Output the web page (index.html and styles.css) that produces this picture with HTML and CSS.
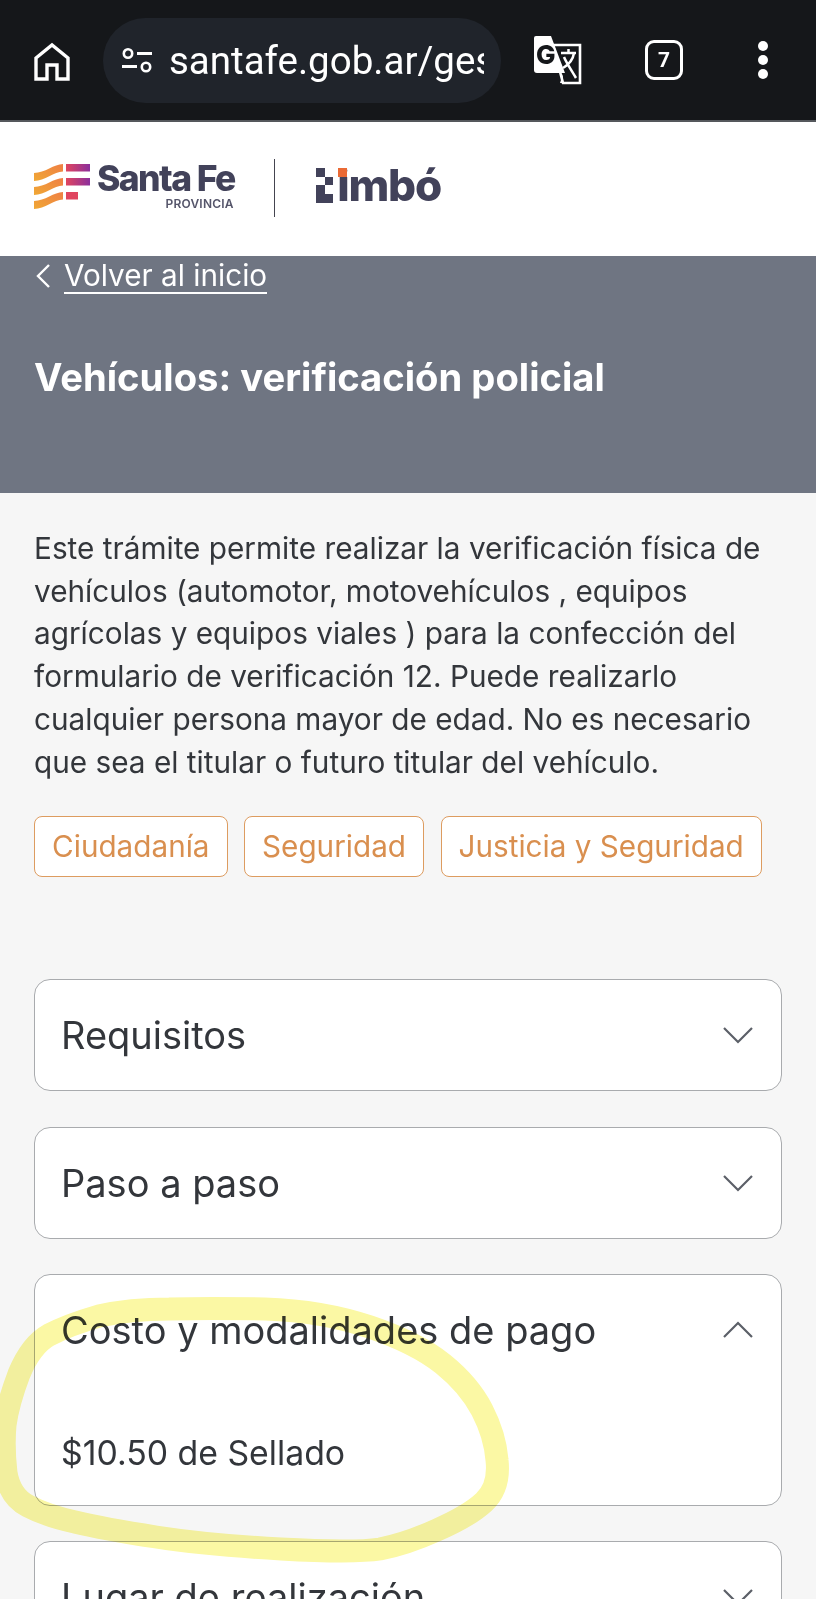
FILE: index.html
```html
<!DOCTYPE html>
<html lang="es">
<head>
<meta charset="utf-8">
<title>Vehículos: verificación policial</title>
<link rel="stylesheet" href="styles.css">
</head>
<body>
<div class="page">
  <div class="browser">
    <svg class="ic-home" viewBox="0 0 38 40" width="38" height="40"><path d="M3 37V16L19 3l16 13v21H24V23H14v14z" fill="none" stroke="#fff" stroke-width="3.4" stroke-linejoin="miter"/></svg>
    <div class="omnibox">
      <svg class="ic-tune" viewBox="0 0 32 28" width="32" height="28"><circle cx="7" cy="6.500" r="4.200" fill="none" stroke="#fff" stroke-width="2.600"/><path d="M16 6.500h15M1 19.500h15" stroke="#fff" stroke-width="2.800"/><circle cx="25" cy="20" r="4.200" fill="none" stroke="#fff" stroke-width="2.600"/></svg>
      <div class="url">santafe.gob.ar/ges</div>
    </div>
    <svg class="ic-translate" viewBox="0 0 50 50" width="50" height="50">
      <path d="M20 10h27v38H30z" fill="#15171a" stroke="#fff" stroke-width="2.600"/>
      <path d="M30 39l-3 9h3z" fill="#fff"/>
      <path d="M3 1h15l14 37H4a3 3 0 0 1-3-3V3a2 2 0 0 1 2-2z" fill="#fff"/>
      <text x="3" y="29" class="ic-g">G</text>
      <path d="M28 18h15M35.500 14v4M41 18c-1 7-6 12-11 15M31 22c2 5 6 11 12 21" fill="none" stroke="#fff" stroke-width="2.500"/>
    </svg>
    <div class="tabs">7</div>
    <svg class="ic-menu" viewBox="0 0 12 40" width="12" height="40"><circle cx="6" cy="6" r="5" fill="#fff"/><circle cx="6" cy="20" r="5" fill="#fff"/><circle cx="6" cy="34" r="5" fill="#fff"/></svg>
  </div>

  <header class="site-head">
    <div class="sf-logo">
      <svg class="sf-mark" viewBox="0 0 56 45" width="56" height="45">
        <defs>
          <linearGradient id="wave" x1="0" y1="1" x2="1" y2="0"><stop offset="0" stop-color="#f0a834"/><stop offset="1" stop-color="#ef7f45"/></linearGradient>
          <linearGradient id="bar" x1="0" y1="0" x2="1" y2="0"><stop offset="0" stop-color="#e0455f"/><stop offset="1" stop-color="#8b2f9c"/></linearGradient>
        </defs>
        <path d="M0 9c11 0 20-9 29-9v7.500C20 7.500 11 17 0 17z" fill="url(#wave)"/>
        <path d="M0 23c11 0 20-9 29-9v7.500C20 21.500 11 31 0 31z" fill="url(#wave)"/>
        <path d="M0 37c11 0 20-9 29-9v7.500C20 35.500 11 45 0 45z" fill="url(#wave)"/>
        <rect x="32" y="0" width="24" height="7.500" fill="url(#bar)"/>
        <rect x="32" y="14" width="24" height="7.500" fill="url(#bar)"/>
        <rect x="32" y="28" width="12" height="7.500" fill="#e0455f"/>
      </svg>
      <div class="sf-text">
        <div class="sf-name">Santa Fe</div>
        <div class="sf-prov">PROVINCIA</div>
      </div>
    </div>
    <div class="head-rule"></div>
    <div class="timbo">
      <svg class="timbo-mark" viewBox="0 0 17 35" width="17" height="35">
        <rect x="0" y="0" width="9" height="9" fill="#42425a"/>
        <rect x="9" y="9" width="8" height="8" fill="#42425a"/>
        <rect x="0" y="17" width="9" height="18" fill="#42425a"/>
        <rect x="9" y="26" width="8" height="9" fill="#42425a"/>
      </svg>
      <span class="timbo-text">imbó<i class="timbo-dot"></i></span>
    </div>
  </header>

  <section class="hero">
    <a class="back" href="#">
      <svg viewBox="0 0 16 26" width="16" height="26"><path d="M14 2L3 13l11 11" fill="none" stroke="#fff" stroke-width="2.400"/></svg>
      <span>Volver al inicio</span>
    </a>
    <h1>Vehículos: verificación policial</h1>
  </section>

  <main class="content">
    <p class="intro">Este trámite permite realizar la verificación física de vehículos (automotor, motovehículos , equipos agrícolas y equipos viales ) para la confección del formulario de verificación 12. Puede realizarlo cualquier persona mayor de edad. No es necesario que sea el titular o futuro titular del vehículo.</p>
    <div class="chips">
      <span class="chip">Ciudadanía</span>
      <span class="chip">Seguridad</span>
      <span class="chip">Justicia y Seguridad</span>
    </div>
    <div class="accordions">
      <div class="acc">
        <div class="acc-head"><span>Requisitos</span><svg viewBox="0 0 30 18" width="30" height="18"><path d="M1 2l14 14L29 2" fill="none" stroke="#5c6068" stroke-width="2.200"/></svg></div>
      </div>
      <div class="acc">
        <div class="acc-head"><span>Paso a paso</span><svg viewBox="0 0 30 18" width="30" height="18"><path d="M1 2l14 14L29 2" fill="none" stroke="#5c6068" stroke-width="2.200"/></svg></div>
      </div>
      <div class="acc acc-open">
        <div class="acc-head"><span>Costo y modalidades de pago</span><svg viewBox="0 0 30 18" width="30" height="18"><path d="M1 16L15 2l14 14" fill="none" stroke="#5c6068" stroke-width="2.200"/></svg></div>
        <div class="acc-body">$10.50 de Sellado</div>
      </div>
      <div class="acc">
        <div class="acc-head"><span>Lugar de realización</span><svg viewBox="0 0 30 18" width="30" height="18"><path d="M1 2l14 14L29 2" fill="none" stroke="#5c6068" stroke-width="2.200"/></svg></div>
      </div>
    </div>
  </main>

  <svg class="scribble" viewBox="0 0 816 1599" width="816" height="1599">
    <path d="M169 1309Q208 1308 265 1309Q323 1311 370 1327Q417 1343 443 1364Q469 1385 482 1410Q495 1435 497 1460Q500 1487 484 1502Q469 1516 437 1530Q406 1544 380 1549Q354 1553 281 1549Q208 1545 156 1537Q104 1529 75 1522Q47 1516 28 1506Q10 1497 6 1473Q3 1447 5 1425Q8 1403 19 1374Q31 1345 49 1335Q68 1325 99 1316Q130 1309 169 1309Z" fill="none" stroke="#fbf8a4" stroke-width="23" stroke-linecap="round" stroke-linejoin="round"/>
  </svg>
</div>
</body>
</html>
```
FILE: styles.css
```css
* { box-sizing: border-box; }
html, body { margin: 0; padding: 0; }
body { background: #f6f6f6; font-family: Inter, "Liberation Sans", sans-serif; }
.page { position: relative; width: 816px; height: 1599px; overflow: hidden; background: #f6f6f6; }

.browser { height: 122px; background: #15171a; border-bottom: 2px solid #55585c; display: flex; align-items: center; padding: 0 0 0 33px; }
.ic-home { flex: none; margin-top: 4px; }
.omnibox { flex: none; width: 398px; height: 85px; margin-left: 32px; margin-top: 1px; background: #20242b; border-radius: 43px; display: flex; align-items: center; padding: 0 17px 0 18px; }
.ic-tune { flex: none; }
.url { margin-left: 16px; font-family: Roboto, sans-serif; font-size: 38.500px; color: #fff; white-space: nowrap; overflow: hidden; flex: 1; min-width: 0; }
.ic-translate { flex: none; margin-left: 32px; }
.ic-g { font-family: Inter, sans-serif; font-size: 26px; font-weight: 800; fill: #15171a; }
.tabs { flex: none; width: 38px; height: 40px; margin-left: 62px; border: 3.500px solid #fff; border-radius: 9px; color: #fff; font-family: Roboto, sans-serif; font-weight: 700; font-size: 21px; display: flex; align-items: center; justify-content: center; }
.ic-menu { flex: none; margin-left: 74px; }

.site-head { height: 134px; background: #fff; display: flex; align-items: flex-start; padding-left: 34px; }
.sf-logo { display: flex; align-items: flex-start; margin-top: 42px; }
.sf-mark { flex: none; }
.sf-text { margin-left: 7px; display: flex; flex-direction: column; align-items: flex-end; }
.sf-name { font-size: 35.500px; line-height: 30px; font-weight: 800; color: #42425a; letter-spacing: -1.600px; white-space: nowrap; }
.sf-prov { font-size: 12px; line-height: 14px; font-weight: 600; color: #55556a; margin-top: 3px; margin-right: 1px; letter-spacing: 0.200px; }
.head-rule { width: 1.500px; height: 58px; background: #44444f; margin-left: 39px; margin-top: 37px; }
.timbo { display: flex; align-items: flex-end; margin-left: 41px; margin-top: 46px; height: 35px; }
.timbo-mark { flex: none; }
.timbo-text { position: relative; font-size: 44px; line-height: 35px; font-weight: 800; color: #42425a; letter-spacing: -1.200px; height: 35px; margin-left: 4px; }
.timbo-dot { position: absolute; left: 1px; top: 0; width: 9px; height: 9px; background: #ea6a35; box-shadow: 0 -3px 0 #fff; }

.hero { height: 237px; background: #6f7582; color: #fff; padding: 0 34px; }
.back { display: inline-flex; align-items: center; color: #fff; text-decoration: none; height: 40px; font-size: 29.700px; }
.back svg { flex: none; margin-left: 1px; margin-right: 13px; }
.back span { border-bottom: 2px solid #fff; line-height: 33px; }
h1 { margin: 59px 0 0; font-size: 38.200px; line-height: 44px; font-weight: 700; }

.content { padding: 34px 34px 0; color: #33363b; }
.intro { margin: 0; font-size: 29.750px; line-height: 42.700px; }
.chips { display: flex; gap: 16.500px; margin-top: 32.500px; }
.chip { height: 61px; padding: 0 17px; display: flex; align-items: center; background: #fff; border: 1px solid #dd9c60; border-radius: 8px; color: #d98f4f; font-size: 29.700px; white-space: nowrap; }
.accordions { margin-top: 102.500px; display: flex; flex-direction: column; gap: 35.300px; width: 748px; }
.acc { background: #fff; border: 1.500px solid #a9abae; border-radius: 16px; padding: 0 28px 0 26px; }
.acc-head { height: 110px; display: flex; align-items: center; justify-content: space-between; font-size: 38px; color: #33363b; }
.acc-body { font-size: 33.800px; line-height: 44px; height: 120px; padding-top: 46px; color: #33363b; }

.scribble { position: absolute; left: 0; top: 0; mix-blend-mode: multiply; pointer-events: none; }
```
